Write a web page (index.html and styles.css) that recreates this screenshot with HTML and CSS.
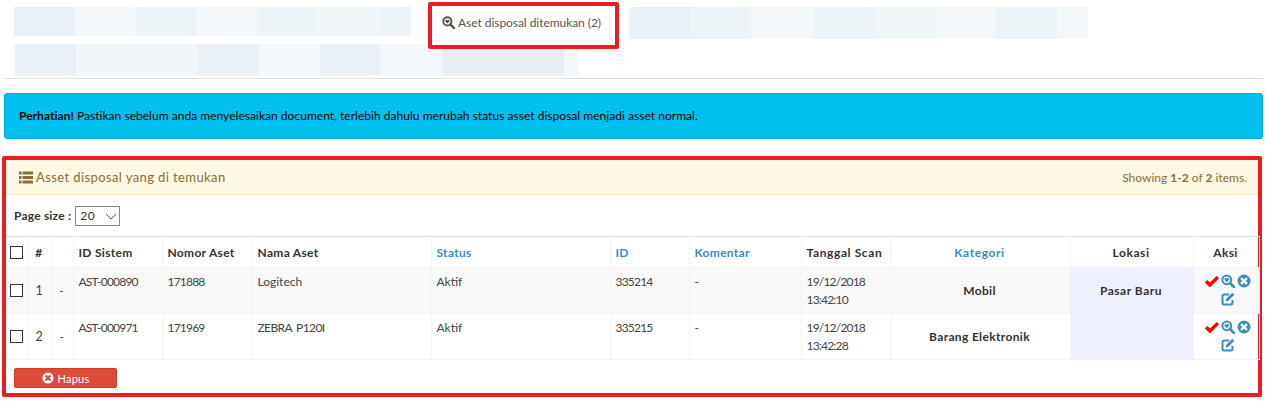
FILE: index.html
```html
<!DOCTYPE html>
<html lang="id">
<head>
<meta charset="utf-8">
<title>Asset disposal</title>
<link rel="stylesheet" href="styles.css">
</head>
<body>
<svg class="defs" width="0" height="0" aria-hidden="true">
  <symbol id="i-search" viewBox="0 0 14 14"><circle cx="5.8" cy="5.8" r="4.4" fill="none" stroke="currentColor" stroke-width="2"/><path d="M9 9l4 4" fill="none" stroke="currentColor" stroke-width="2.6" stroke-linecap="round"/><path d="M5.8 8.2L3.7 6.1a1.3 1.3 0 0 1 2.1-1.6a1.3 1.3 0 0 1 2.1 1.6z" fill="currentColor"/></symbol>
  <symbol id="i-x" viewBox="0 0 14 14"><path fill-rule="evenodd" d="M7 .5a6.5 6.5 0 1 1 0 13a6.5 6.5 0 0 1 0-13zM4.9 3.2L3.2 4.9L5.3 7L3.2 9.1l1.7 1.7L7 8.7l2.1 2.1l1.7-1.7L8.7 7l2.1-2.1l-1.7-1.7L7 5.3z" fill="currentColor"/></symbol>
  <symbol id="i-check" viewBox="0 0 15 12"><path d="M1.2 6.2L5.3 10.3L13.8 1.8" fill="none" stroke="currentColor" stroke-width="3.6"/></symbol>
  <symbol id="i-edit" viewBox="0 0 14 14"><path d="M11.5 8v2.8a1.7 1.7 0 0 1-1.7 1.7H3.2a1.7 1.7 0 0 1-1.7-1.7V4.2a1.7 1.7 0 0 1 1.7-1.7H8" fill="none" stroke="currentColor" stroke-width="2"/><path d="M11.3.8l2 2l-6 6l-2.6.6l.6-2.6z" fill="currentColor"/></symbol>
  <symbol id="i-list" viewBox="0 0 14 13"><path d="M0 .5h2.5v3H0zM0 5h2.5v3H0zM0 9.5h2.5v3H0zM3.5 .5H14v3H3.5zM3.5 5H14v3H3.5zM3.5 9.5H14v3H3.5z" fill="currentColor"/></symbol>
  <symbol id="i-chev" viewBox="0 0 12 7"><path d="M1 1l5 5l5-5" fill="none" stroke="currentColor" stroke-width="1"/></symbol>
</svg>

<div class="top-row">
  <div class="blur blur-a"><i class="p w61 c1"></i><i class="p w61 c2"></i><i class="p w61 c3"></i><i class="p w60 c2"></i><i class="p w61 c3"></i><i class="p w62 c4"></i><i class="p w31 c3"></i></div>
  <div class="tab"><svg class="tab-icon"><use href="#i-search"/></svg><span>Aset disposal ditemukan (2)</span></div>
  <div class="blur blur-b"><i class="p w61 c1"></i><i class="p w61 c3"></i><i class="p w62 c2"></i><i class="p w61 c3"></i><i class="p w62 c4"></i><i class="p w60 c2"></i><i class="p w61 c3"></i><i class="p w31 c2"></i></div>
</div>
<div class="blur blur-c"><i class="p w61 c1"></i><i class="p w122 c4"></i><i class="p w61 c1"></i><i class="p w61 c2"></i><i class="p w60 c1"></i><i class="p w62 c2"></i><i class="p w122 c5"></i><i class="p w14 c2"></i></div>

<hr class="rule">

<div class="alert"><strong>Perhatian!</strong> Pastikan sebelum anda menyelesaikan document, terlebih dahulu merubah status asset disposal menjadi asset normal.</div>

<section class="panel">
  <header class="panel-head">
    <h3 class="panel-title"><svg class="list-icon"><use href="#i-list"/></svg>Asset disposal yang di temukan</h3>
    <div class="summary">Showing <b>1-2</b> of <b>2</b> items.</div>
  </header>
  <div class="page-size"><label for="ps">Page size :</label><span class="ps-wrap"><select id="ps" class="ps-select"><option>20</option></select><svg class="ps-chev"><use href="#i-chev"/></svg></span></div>
  <table class="grid">
    <colgroup>
      <col class="c-check"><col class="c-num"><col class="c-dash"><col class="c-sys"><col class="c-no"><col class="c-name"><col class="c-status"><col class="c-id"><col class="c-com"><col class="c-date"><col class="c-cat"><col class="c-loc"><col class="c-act">
    </colgroup>
    <thead>
      <tr>
        <th class="mid"><input type="checkbox" class="box"></th>
        <th class="mid">#</th>
        <th></th>
        <th>ID Sistem</th>
        <th>Nomor Aset</th>
        <th>Nama Aset</th>
        <th class="link">Status</th>
        <th class="link">ID</th>
        <th class="link">Komentar</th>
        <th class="wide">Tanggal Scan</th>
        <th class="link mid wide">Kategori</th>
        <th class="mid wide">Lokasi</th>
        <th class="mid">Aksi</th>
      </tr>
    </thead>
    <tbody>
      <tr class="odd">
        <td class="mid vm"><input type="checkbox" class="box"></td>
        <td class="mid vm num">1</td>
        <td class="mid vm">-</td>
        <td class="dg">AST-000890</td>
        <td class="dg">171888</td>
        <td>Logitech</td>
        <td>Aktif</td>
        <td class="dg">335214</td>
        <td>-</td>
        <td class="dg">19/12/2018<br>13:42:10</td>
        <td class="mid vm strong">Mobil</td>
        <td class="mid vm strong loc">Pasar Baru</td>
        <td class="actions"><svg class="a-check"><use href="#i-check"/></svg><svg class="a-icon"><use href="#i-search"/></svg><svg class="a-icon"><use href="#i-x"/></svg><br><svg class="a-icon a-edit"><use href="#i-edit"/></svg></td>
      </tr>
      <tr>
        <td class="mid vm"><input type="checkbox" class="box"></td>
        <td class="mid vm num">2</td>
        <td class="mid vm">-</td>
        <td class="dg">AST-000971</td>
        <td class="dg">171969</td>
        <td class="dg-soft">ZEBRA P120I</td>
        <td>Aktif</td>
        <td class="dg">335215</td>
        <td>-</td>
        <td class="dg">19/12/2018<br>13:42:28</td>
        <td class="mid vm strong">Barang Elektronik</td>
        <td class="loc"></td>
        <td class="actions"><svg class="a-check"><use href="#i-check"/></svg><svg class="a-icon"><use href="#i-search"/></svg><svg class="a-icon"><use href="#i-x"/></svg><br><svg class="a-icon a-edit"><use href="#i-edit"/></svg></td>
      </tr>
    </tbody>
  </table>
  <div class="panel-foot"><button class="btn-del" type="button"><svg class="btn-icon"><use href="#i-x"/></svg>Hapus</button></div>
</section>
</body>
</html>
```
FILE: styles.css
```css
* { box-sizing: border-box; }
html, body { margin: 0; padding: 0; background: #fff; }
body { font-family: "Lato", "Noto Sans", sans-serif; font-size: 12px; color: #333; height: 401px; overflow: hidden; }
.defs { position: absolute; }

.top-row { display: flex; align-items: flex-start; height: 44px; padding: 7px 0 0 14px; }
.blur { display: flex; }
.blur-a { height: 29px; }
.blur-b { height: 32px; margin-left: 10px; }
.blur-c { height: 31px; margin-left: 15px; }
.p { display: block; height: 100%; }
.w14 { width: 14px; } .w31 { width: 31px; } .w60 { width: 60px; } .w61 { width: 61px; } .w62 { width: 62px; } .w122 { width: 122px; }
.c1 { background: #e9f0f7; } .c2 { background: #f4f8fb; } .c3 { background: #edf4f8; } .c4 { background: #f1f6f9; } .c5 { background: #e7eff6; }

.tab { position: relative; z-index: 1; display: flex; align-items: flex-start; gap: 3px; width: 191px; height: 47px; margin: -5px 0 0 17px; padding: 9px 0 0 10px; border: 4px solid #ed1c24; border-radius: 2px; background: #fff; font-size: 12px; letter-spacing: -.05px; line-height: 16px; color: #555; }
.tab-icon { width: 13px; height: 13px; margin-top: 1px; color: #555; }

.rule { height: 1px; margin: 3px 2px 0 4px; border: 0; background: #ddd; }

.alert { height: 46px; margin: 14px 2px 0 4px; padding: 13px 14px; border: 1px solid #00acd6; border-radius: 3px; background: #00c0ef; color: #000; font-size: 12px; letter-spacing: .03px; line-height: 17px; }

.panel { height: 241px; margin: 17px 3px 0 2px; border: 4px solid #ed1c24; border-radius: 2px; }
.panel-head { display: flex; justify-content: space-between; align-items: center; height: 35px; padding: 0 11px 0 13px; background: #fcf8e3; border-bottom: 1px solid #faebcc; color: #8a6d3b; }
.panel-title { margin: 0; font-size: 13px; font-weight: 400; letter-spacing: .4px; line-height: 18px; display: flex; align-items: center; gap: 3px; }
.list-icon { width: 14px; height: 13px; }
.summary { font-size: 12px; }

.page-size { display: flex; align-items: center; gap: 4px; height: 41px; padding: 0 0 0 8px; font-weight: 700; letter-spacing: .2px; }
.ps-wrap { position: relative; display: block; width: 45px; height: 20px; }
.ps-select { display: block; appearance: none; width: 100%; height: 100%; padding: 0 0 0 4px; border: 1px solid #888; border-radius: 0; background: #fff; font: 12px "Lato", sans-serif; letter-spacing: .6px; color: #333; }
.ps-chev { position: absolute; right: 3px; top: 7px; width: 12px; height: 7px; color: #555; pointer-events: none; }

.grid { width: 100%; table-layout: fixed; border-collapse: collapse; border-top: 1px solid #ddd; border-bottom: 1px solid #ddd; }
.c-check { width: 22px; } .c-num { width: 23px; } .c-dash { width: 22px; } .c-sys { width: 89px; } .c-no { width: 90px; } .c-name { width: 179px; } .c-status { width: 179px; } .c-id { width: 79px; } .c-com { width: 112px; } .c-date { width: 89px; } .c-cat { width: 180px; } .c-loc { width: 123px; } .c-act { width: 66px; }
.grid th, .grid td { padding: 5px 5px 4px 5px; line-height: 18px; text-align: left; vertical-align: top; border: 1px solid #f4f4f4; border-width: 0 1px 1px 0; font-size: 12px; overflow: hidden; }
.grid th { height: 30px; padding: 7px 5px 5px 5px; font-weight: 700; letter-spacing: .3px; color: #333; white-space: nowrap; }
.grid td { color: #444; }
.grid .link { color: #3c8dbc; }
.grid .mid { text-align: center; padding-left: 0; padding-right: 1px; }
.grid .wide { letter-spacing: .6px; }
.grid .vm { vertical-align: middle; }
.grid .num { font-size: 12.5px; }
.grid .dg { letter-spacing: -.8px; }
.grid .dg-soft { letter-spacing: -.6px; word-spacing: 2px; }
.grid .strong { font-weight: 700; letter-spacing: .35px; color: #333; }
.grid .loc { letter-spacing: .5px; }
.grid td.loc { background: #eef0fd; border-bottom-color: #eef0fd; }
.odd td { background: #f9f9f9; }
.odd td.loc { background: #eef0fd; }
.grid th:first-child, .grid td:first-child { padding: 0; vertical-align: middle; }
.box { appearance: none; display: block; width: 13px; height: 13px; margin: 0 0 0 4px; border: 1px solid #333; background: #fff; }
.grid td.actions { padding: 6px 0 0 3px; text-align: center; color: #3c8dbc; line-height: 18px; white-space: nowrap; }
.a-check { width: 14px; height: 12px; color: #f00; }
.a-icon { width: 14px; height: 14px; margin-left: 2px; vertical-align: -1px; }
.a-edit { margin-left: 0; }

.panel-foot { padding: 8px 8px 0; }
.btn-del { display: flex; align-items: center; justify-content: center; gap: 4px; width: 103px; height: 20px; padding: 0; border: 1px solid #d73925; border-radius: 2px; background: #dd4b39; color: #fff; font: 11px "Lato", sans-serif; letter-spacing: .2px; }
.btn-icon { width: 12px; height: 12px; }
```
